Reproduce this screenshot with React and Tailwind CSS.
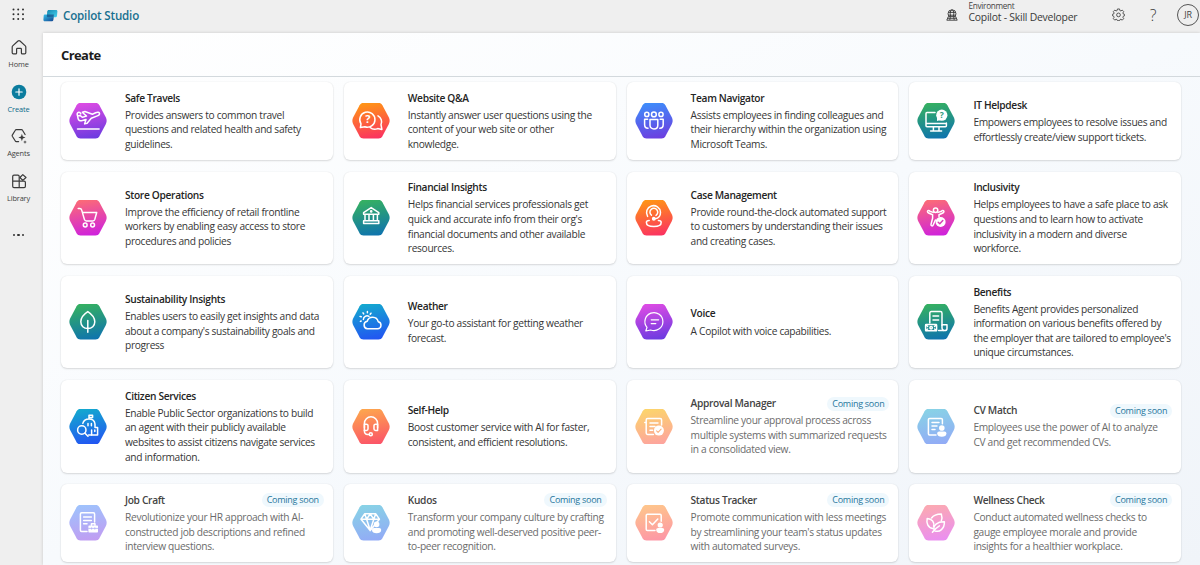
import { useId } from 'react';

const HEX_PATH =
  'M11.5 0h15c1.8 0 3 .6 3.9 2.2l6.5 12.3c1 2 1 4.4 0 6.4l-6.5 12.3c-.9 1.6-2.1 2.2-3.9 2.2h-15c-1.8 0-3-.6-3.9-2.2L1.1 20.9c-1-2-1-4.4 0-6.4L7.6 2.2C8.5.6 9.7 0 11.5 0z';

const gradients = {
  purple: ['#dc4be4', '#6d3be0'],
  orange: ['#ff9416', '#fb3360'],
  indigo: ['#3f8cfa', '#6c3fe0'],
  green: ['#35b062', '#0f74ad'],
  pink: ['#fb6a78', '#cf22dc'],
  blue: ['#14a8cf', '#2255f2'],
  coral: ['#fda54e', '#fb5468'],
  softYellow: ['#fcd46c', '#fda49e'],
  softBlue: ['#88d2e6', '#92abf6'],
  softIndigo: ['#9fc2fc', '#c09df2'],
  softCoral: ['#fec58c', '#fd97a6'],
  softPink: ['#fba9b2', '#ea8ff0'],
};

// White drawings that sit on top of the hexagons (38 x 35.4 space)
const glyphs = {
  plane: (
    <>
      <path d="M8.6 12.9l2.3-.5 2.6 1.9 4-1.2-4.2-3.9 2.7-.7 7.4 2.7 3.3-1.5c2-.8 3.6-.4 3.8.6.2 1-.7 2-2.2 2.6l-6 2.4-4.2 5-2.5.6 1.4-4.4-3.6 1c-2.4.6-4 0-4.300-1.800z" />
      <path d="M8.6 12.900c-.6-1.400-.4-3 .6-3.600 1-.5 2 .2 2.600 1.600M8.500 26h21.600" />
    </>
  ),
  qna: (
    <>
      <path d="M9 20.8a7.6 7.6 0 1 1 3.8 3l-4.4.8z" />
      <path d="M26 12.8a6.8 6.8 0 0 1 3 8.9l.9 4.8-4.2-.9c-2.7 1.2-5.8.5-7.6-1.1" />
      <text x="15.9" y="20.5" fontSize="11" fontWeight="700" textAnchor="middle" fill="white" stroke="none">?</text>
    </>
  ),
  team: (
    <>
      <circle cx="11.8" cy="11.4" r="2.1" />
      <circle cx="18.9" cy="11.4" r="2.4" />
      <circle cx="26" cy="11.4" r="2.1" />
      <path d="M15 16.4h7.8v5.8c0 5-7.8 5-7.8 0z" />
      <path d="M12.6 16.2h-3v5.2c0 2.6 1.2 3.8 3.4 3.8M25.2 16.2h3v5.2c0 2.6-1.2 3.8-3.4 3.8" />
    </>
  ),
  helpdesk: (
    <>
      <path d="M18 9.4H10c-.7 0-1 .4-1 1v12.4c0 .7.4 1 1 1h18.4c.7 0 1-.4 1-1V20M9 20.4h20.4M16.4 24v3.6M22 24v3.6M13.6 28h11" />
      <circle cx="24.8" cy="12.2" r="5.6" fill="white" stroke="none" />
      <path d="M20 14v4l3.4-1z" fill="white" stroke="none" />
      <text x="24.8" y="15.4" fontSize="8.5" fontWeight="700" textAnchor="middle" fill="#2a9a7c" stroke="none">?</text>
    </>
  ),
  cart: (
    <>
      <path d="M9.2 8.6h1.6c1 0 1.6.5 1.9 1.5l2.7 9.3c.3 1 .9 1.5 1.9 1.5h6.6c1 0 1.6-.5 1.9-1.5l1.9-6.9H13.4" />
      <circle cx="16.2" cy="25" r="1.9" />
      <circle cx="23.6" cy="25" r="1.9" />
    </>
  ),
  bank: (
    <>
      <path d="M11.6 14.2v-1.6L19.2 7.6l7.6 5v1.6zM13 14.2v6.6M17 14.2v6.6M21.4 14.2v6.6M25.4 14.2v6.6M11.6 23.4v-2.6h15.2v2.6z" />
      <circle cx="19.2" cy="11.4" r=".6" />
    </>
  ),
  caseCare: (
    <>
      <path d="M12.600 16.400a7 7 0 1 1 12.900-4.200c0 4-2 6.200-5.400 6.600" />
      <path d="M16.400 15.200a3.900 3.900 0 1 1 4.600.2" />
      <circle cx="18.800" cy="18.800" r="1.200" fill="white" />
      <path d="M14.200 20.600c-1.900 0-2.800.7-2.800 1.900 0 2.500 3.200 4 7.400 4s7.400-1.500 7.400-4c0-1.200-.9-1.900-2.800-1.900" />
    </>
  ),
  inclusivity: (
    <>
      <circle cx="18.6" cy="10.2" r="2.2" />
      <path d="M16.2 12.4l-3.400-1.200c-.6-1-1.800-1-2.200-.2-.4.9.2 1.700 1 2l4 1.800v3.400l-1.600 6.200c-.2 1.500 1.600 2.200 2.200.6l2.200-5M21 12.4l3.600-1.2c.6-1 1.800-1 2.200-.2.4.9-.2 1.700-1 2l-3.800 1.800v1.600" />
      <circle cx="23.600" cy="22" r="5" fill="white" stroke="none" />
      <path d="M21.200 22.200l1.600 1.600 3-3.200" stroke="#dc3fb6" />
    </>
  ),
  leaf: <path d="M18.800 7.600c-4 2.600-7 6-7 10.200 0 4 3 6.800 7 6.800s7-2.800 7-6.800c0-4.200-3-7.600-7-10.200zM18.800 16.400v11.800" />,
  weather: (
    <>
      <path d="M15.4 24.8h10.2a3.6 3.6 0 0 0 .6-7.1 5.7 5.7 0 0 0-11-.4 3.8 3.8 0 0 0 .2 7.5z" />
      <path d="M11.4 15.6a3.7 3.7 0 0 1 5.6-3.2M8.4 17.4l.8-.4M8 12.4l1.2.4M11 8.8l.7 1.1M15.4 7.6v1.2M19 9.2l-.8 1" />
    </>
  ),
  voice: (
    <>
      <path d="M12 23.4a9 9 0 1 1 3.6 2.6l-4.8 1z" strokeWidth="1.2" />
      <path d="M16.2 15.8h7.4M16.2 19.6h4.6" strokeWidth="1.2" />
    </>
  ),
  benefits: (
    <>
      <path d="M12.8 19V9.2c0-1 .6-1.6 1.6-1.6h9c1 0 1.6.6 1.6 1.6v12M16 12h5.6M16 16h5.6M25 20.8h5v3.6c0 1.4-.8 2.2-2.4 2.2h-6" />
      <path d="M25 21v3c0 1.2.6 2 1.6 2.4" />
      <rect x="8.6" y="20.6" width="11" height="6.2" rx=".6" />
      <circle cx="14.1" cy="23.7" r="1.2" />
      <path d="M9 21l1.600 1.400M19.200 21l-1.600 1.400M9 26.400l1.600-1.400M19.200 26.400L17.600 25" />
    </>
  ),
  citizen: (
    <>
      <path d="M13.8 14.4c.8-3 3.4-4.4 6.2-4.4s5.6 1.4 6 5v3.6h2.6V26h-9M20 10V6.2h3.6v2.4H20" />
      <path d="M19 14.6v2.2M22.4 14.6v2.2M22.6 26v-5M25.8 21v1.6" />
      <circle cx="12.8" cy="21" r="4.2" />
      <path d="M16 24.2l3 3" />
    </>
  ),
  headset: (
    <>
      <path d="M12.4 19v-4.6a6.6 6.6 0 0 1 13.2 0V19M12.4 21v1c0 2 1.2 3.4 3.2 3.4h1.6" />
      <path d="M12.4 15.2h2c1 0 1.6.5 1.6 1.4V20c0 .9-.6 1.4-1.6 1.4h-2zM25.6 15.2h-2c-1 0-1.6.5-1.6 1.4V20c0 .9.6 1.4 1.6 1.4h2z" />
      <circle cx="18.8" cy="25.2" r="1.5" />
    </>
  ),
  approval: (
    <>
      <path d="M18.4 25.4h-5.8c-1 0-1.4-.5-1.4-1.4V11c0-1 .5-1.4 1.4-1.4h12.6c1 0 1.4.5 1.4 1.4v5M15 14h8M15 17.6h5M15 21.2h2.6M9.8 13.4h1.4" />
      <circle cx="23.9" cy="21.6" r="5" fill="white" stroke="none" />
      <path d="M21.6 21.8l1.5 1.5 3-3.1" stroke="#fcb07e" strokeWidth="1.1" />
    </>
  ),
  cv: (
    <>
      <path d="M19 26H12.6c-.8 0-1.2-.4-1.2-1.2V10.6c0-.8.4-1.2 1.2-1.2h11.6c.8 0 1.2.4 1.2 1.2v4.2M15 13.4h7M15 17h5M15 20.6h3" />
      <circle cx="24.8" cy="19" r="2.8" fill="white" stroke="none" />
      <path d="M20.200 24.400c0-1.300.8-2 2-2h5.200c1.200 0 2 .7 2 2 0 2.200-1.900 3.300-4.600 3.300s-4.600-1.100-4.600-3.300z" fill="white" stroke="none" />
    </>
  ),
  job: (
    <>
      <path d="M18 26.4h-5.4c-.8 0-1.2-.4-1.2-1.2V9c0-.8.4-1.2 1.2-1.2h11.8c.8 0 1.2.4 1.2 1.2v8M14.600 12h7.800M14.600 15.400h7.800M14.600 18.800h3.400" />
      <path d="M20.400 20.400h7.600c.7 0 1 .3 1 1v5.200c0 .7-.3 1-1 1h-7.600c-.7 0-1-.3-1-1v-5.200c0-.7.3-1 1-1z" fill="white" stroke="none" />
      <path d="M22.400 20.200v-1.400h3.600v1.400" />
      <path d="M19.600 23.400h9.200M22.600 22.800v1.400M25.800 22.800v1.400" stroke="#b0aff7" strokeWidth=".8" />
    </>
  ),
  diamond: (
    <>
      <path d="M12.6 8.8h11.2l3.6 5.4-9.2 11.4L9 14.2zM9 14.2h18.4M14.6 14.2l3.600 11M21.800 14.200l-3.600 11M12.800 9l1.800 5.200 3.600-5.200 3.600 5.200 1.800-5.200" />
      <circle cx="24.6" cy="19.4" r="2.800" fill="white" stroke="none" />
      <path d="M20 25c0-1.300.8-2 2-2h5.200c1.200 0 2 .7 2 2 0 2.200-1.900 3.300-4.600 3.300S20 27.200 20 25z" fill="white" stroke="none" />
    </>
  ),
  status: (
    <>
      <path d="M20 25.4h-7.6c-.8 0-1.2-.4-1.2-1.2V10.4c0-.8.4-1.2 1.2-1.2H25c.8 0 1.2.4 1.2 1.2v5.8M14.4 16.8l3 3 5.4-5.8" />
      <circle cx="25.2" cy="20" r="2.6" fill="white" stroke="none" />
      <path d="M21.200 25c0-1.200.8-1.900 1.900-1.900h4.200c1.100 0 1.900.7 1.900 1.900 0 2.100-1.700 3.100-4 3.100s-4-1-4-3.100z" fill="white" stroke="none" />
    </>
  ),
  wellness: (
    <>
      <path d="M14.6 13c1.600-2.400 4.800-3.900 9.700-4 .8 2.400.8 5 0 7" />
      <path d="M16.600 21.200c1.200-4-1.600-7.400-6.400-7.800-1 4.600.600 9.400 5.600 10.200" />
      <path d="M17.200 25.600c-1.800-5.400 3.400-9 10.200-8.800.2 6.600-4.600 11.400-10.200 8.800zM15.400 27.200c2-2.800 4-4.600 7-6.400" />
    </>
  ),
};

const agents = [
  { title: 'Safe Travels', icon: 'plane', color: 'purple', lines: ['Provides answers to common travel', 'questions and related health and safety', 'guidelines.'] },
  { title: 'Website Q&A', icon: 'qna', color: 'orange', lines: ['Instantly answer user questions using the', 'content of your web site or other', 'knowledge.'] },
  { title: 'Team Navigator', icon: 'team', color: 'indigo', lines: ['Assists employees in finding colleagues and', 'their hierarchy within the organization using', 'Microsoft Teams.'] },
  { title: 'IT Helpdesk', icon: 'helpdesk', color: 'green', lines: ['Empowers employees to resolve issues and', 'effortlessly create/view support tickets.'] },
  { title: 'Store Operations', icon: 'cart', color: 'pink', lines: ['Improve the efficiency of retail frontline', 'workers by enabling easy access to store', 'procedures and policies'] },
  { title: 'Financial Insights', icon: 'bank', color: 'green', lines: ['Helps financial services professionals get', "quick and accurate info from their org's", 'financial documents and other available', 'resources.'] },
  { title: 'Case Management', icon: 'caseCare', color: 'orange', lines: ['Provide round-the-clock automated support', 'to customers by understanding their issues', 'and creating cases.'] },
  { title: 'Inclusivity', icon: 'inclusivity', color: 'pink', lines: ['Helps employees to have a safe place to ask', 'questions and to learn how to activate', 'inclusivity in a modern and diverse', 'workforce.'] },
  { title: 'Sustainability Insights', icon: 'leaf', color: 'green', lines: ['Enables users to easily get insights and data', "about a company's sustainability goals and", 'progress'] },
  { title: 'Weather', icon: 'weather', color: 'blue', lines: ['Your go-to assistant for getting weather', 'forecast.'] },
  { title: 'Voice', icon: 'voice', color: 'purple', lines: ['A Copilot with voice capabilities.'] },
  { title: 'Benefits', icon: 'benefits', color: 'green', lines: ['Benefits Agent provides personalized', 'information on various benefits offered by', "the employer that are tailored to employee's", 'unique circumstances.'] },
  { title: 'Citizen Services', icon: 'citizen', color: 'blue', lines: ['Enable Public Sector organizations to build', 'an agent with their publicly available', 'websites to assist citizens navigate services', 'and information.'] },
  { title: 'Self-Help', icon: 'headset', color: 'coral', lines: ['Boost customer service with AI for faster,', 'consistent, and efficient resolutions.'] },
  { title: 'Approval Manager', icon: 'approval', color: 'softYellow', soon: true, lines: ['Streamline your approval process across', 'multiple systems with summarized requests', 'in a consolidated view.'] },
  { title: 'CV Match', icon: 'cv', color: 'softBlue', soon: true, lines: ['Employees use the power of AI to analyze', 'CV and get recommended CVs.'] },
  { title: 'Job Craft', icon: 'job', color: 'softIndigo', soon: true, lines: ['Revolutionize your HR approach with AI-', 'constructed job descriptions and refined', 'interview questions.'] },
  { title: 'Kudos', icon: 'diamond', color: 'softBlue', soon: true, lines: ['Transform your company culture by crafting', 'and promoting well-deserved positive peer-', 'to-peer recognition.'] },
  { title: 'Status Tracker', icon: 'status', color: 'softCoral', soon: true, lines: ['Promote communication with less meetings', "by streamlining your team's status updates", 'with automated surveys.'] },
  { title: 'Wellness Check', icon: 'wellness', color: 'softPink', soon: true, lines: ['Conduct automated wellness checks to', 'gauge employee morale and provide', 'insights for a healthier workplace.'] },
];

function HexIcon({ icon, color }) {
  const id = useId();
  const [from, to] = gradients[color];
  return (
    <svg viewBox="0 0 38 35.4" className="h-[35.4px] w-[38px] shrink-0">
      <defs>
        <linearGradient id={id} x1="0.4" y1="0" x2="0.6" y2="1">
          <stop offset="0" stopColor={from} />
          <stop offset="1" stopColor={to} />
        </linearGradient>
      </defs>
      <path d={HEX_PATH} fill={`url(#${id})`} />
      <g fill="none" stroke="white" strokeWidth="1.5" strokeLinecap="round" strokeLinejoin="round">
        {glyphs[icon]}
      </g>
    </svg>
  );
}

function AgentCard({ agent }) {
  return (
    <div className="flex items-center rounded-[6px] bg-white pl-2 shadow-[0_1px_2px_rgba(0,0,0,0.13),0_0_1.5px_rgba(0,0,0,0.09)]">
      <HexIcon icon={agent.icon} color={agent.color} />
      <div className="ml-[18px] flex-1 whitespace-nowrap">
        <div className="mb-[2.4px] flex h-[15.2px] items-center justify-between pr-[9px] pt-px">
          <h3 className={agent.soon ? 'text-[10.2px] font-semibold tracking-[-0.032em] text-[#444444]' : 'text-[10.2px] font-semibold tracking-[-0.032em] text-[#242424]'}>
            {agent.title}
          </h3>
          {agent.soon && (
            <span className="rounded-full bg-[#eff8fd] px-[5px] text-[9px] leading-[14px] tracking-[-0.03em] text-[#1f769c]">
              Coming soon
            </span>
          )}
        </div>
        <p className={agent.soon ? 'text-[10.2px] leading-[14.6px] tracking-[-0.031em] text-[#6b6b6b]' : 'text-[10.2px] leading-[14.6px] tracking-[-0.031em] text-[#363636]'}>
          {agent.lines.map((line) => (
            <span key={line} className="block">{line}</span>
          ))}
        </p>
      </div>
    </div>
  );
}

function CopilotLogo() {
  return (
    <svg viewBox="0 0 15 14" className="h-[14px] w-[15px]">
      <defs>
        <linearGradient id="logo-top" x1="0" y1="0" x2="1" y2="1">
          <stop offset="0" stopColor="#1587b0" />
          <stop offset="1" stopColor="#45d3f0" />
        </linearGradient>
        <linearGradient id="logo-bottom" x1="0" y1="0" x2="1" y2="1">
          <stop offset="0" stopColor="#37c3ec" />
          <stop offset="1" stopColor="#10418f" />
        </linearGradient>
      </defs>
      <path d="M1.7 5.4h7.9c1 0 1.4.6 1.3 1.5l-.5 3.8c-.2 1-.9 1.6-2 1.6H1.8c-1 0-1.5-.6-1.4-1.5l.3-4.2c.1-.8.4-1.200 1-1.200z" fill="url(#logo-bottom)" />
      <path d="M5.9 1h7.100c1 0 1.500.6 1.400 1.500l-.4 4.200c-.1 1-.8 1.600-1.900 1.600H5.200c-1 0-1.500-.6-1.300-1.500l.3-4.200C4.400 1.600 4.900 1 5.900 1z" fill="url(#logo-top)" />
      <path d="M4 5.400h6.900l-.3 2.900H5.200c-1 0-1.500-.6-1.300-1.500z" fill="#123f7c" opacity=".65" />
    </svg>
  );
}

const navIcons = {
  Home: <path d="M1.7 6.9L7 2c.6-.5 1.4-.5 2 0l5.3 4.9c.3.3.5.7.5 1.2v5.600c0 .7-.5 1.200-1.200 1.200h-2.200c-.6 0-1-.4-1-1v-3.700c0-.5-.3-.8-.8-.8H6.400c-.5 0-.8.3-.8.800v3.700c0 .6-.4 1-1 1H2.400c-.7 0-1.200-.5-1.200-1.200V8.100c0-.5.2-.9.5-1.200z" />,
  Agents: (
    <>
      <path d="M7.600 13.600H5.400c-.5 0-.9-.2-1.100-.6L1.300 8.300c-.2-.4-.2-.8 0-1.200l3-4.900c.2-.4.600-.6 1.100-.6h5c.5 0 .9.2 1.100.6l2.600 4.300" />
      <path d="M10.900 5.800l.9 2.800 2.700.9-2.700.9-.9 2.800-.9-2.800-2.700-.9 2.700-.9z" fill="#3a3a3a" stroke="none" />
      <path d="M14 12.200l.5 1.400 1.400.5-1.400.5-.5 1.400-.5-1.400-1.400-.5 1.400-.5z" fill="#3a3a3a" stroke="none" />
    </>
  ),
  Library: (
    <>
      <path d="M8.200 8.200H1.700M7.600 14.600H3c-.8 0-1.300-.5-1.300-1.300V3.500c0-.8.5-1.300 1.300-1.300h3.900c.8 0 1.300.5 1.300 1.300v11.100M8.200 8.200h4.900c.8 0 1.300.5 1.300 1.300v3.800c0 .8-.5 1.300-1.300 1.300H7.600" />
      <path d="M11.800 1.600l3.200 2.900-3.200 2.900-2.900-2.900z" fill="#efefef" />
    </>
  ),
};

function NavItem({ label }) {
  const active = label === 'Create';
  return (
    <div className="flex h-[44.7px] flex-col items-center">
      {active ? (
        <svg viewBox="0 0 16 16" className="size-4">
          <circle cx="8" cy="8" r="7.3" fill="#0b7c9e" />
          <path d="M8 4.8v6.4M4.8 8h6.4" stroke="white" strokeWidth="1.200" strokeLinecap="round" />
        </svg>
      ) : (
        <svg viewBox="0 0 16 16" className="size-4" fill="none" stroke="#3a3a3a" strokeWidth="1.2" strokeLinejoin="round" strokeLinecap="round">
          {navIcons[label]}
        </svg>
      )}
      <span className={active ? 'mt-1 text-[7.4px] leading-[10px] tracking-[-0.02em] text-[#0b6a8a]' : 'mt-1 text-[7.4px] leading-[10px] tracking-[-0.02em] text-[#424242]'}>
        {label}
      </span>
    </div>
  );
}

export default function App() {
  return (
    <div className="flex h-[565px] w-[1200px] flex-col overflow-hidden bg-[#efefef] font-['Open_Sans','Noto_Sans',sans-serif]">
      <header className="flex h-[32.5px] shrink-0 items-center pl-3">
        <svg viewBox="0 0 12 12" className="mb-1 size-3" fill="#2f2f2f">
          {[1.5, 6.2, 11].map((y) =>
            [1.5, 6.2, 11].map((x) => <circle key={`${x}-${y}`} cx={x} cy={y} r="1" />)
          )}
        </svg>
        <div className="mb-px ml-[19px] flex items-center gap-[5px]">
          <CopilotLogo />
          <span className="text-[11.6px] font-semibold leading-4 tracking-[-0.016em] text-[#19708f]">Copilot Studio</span>
        </div>

        <div className="mb-[3px] ml-auto flex items-center">
          <svg viewBox="0 0 12 12" className="h-3 w-3" fill="none" stroke="#383838" strokeWidth=".9" strokeLinejoin="round">
            <circle cx="6" cy="4.8" r="4" />
            <ellipse cx="6" cy="4.8" rx="1.8" ry="4" />
            <path d="M2.3 3.4h7.4M2.2 6.2h7.6" />
            <path d="M2.3 7.600h7.400l1.500 3.600H.8z" fill="#efefef" />
            <path d="M1.800 9.300h8.400M4.300 7.800l-.5 3.200M7.700 7.800l.5 3.200" />
          </svg>
          <div className="ml-[11px] flex w-[110px] flex-col whitespace-nowrap pb-[5px]">
            <span className="text-[8.2px] leading-[11px] tracking-[-0.035em] text-[#444444]">Environment</span>
            <span className="text-[10.4px] leading-[13px] tracking-[-0.022em] text-[#3a3a3a]">Copilot - Skill Developer</span>
          </div>
          <svg viewBox="0 0 16 16" className="ml-[33.5px] size-[13px]" fill="none" stroke="#444444" strokeWidth="1.1" strokeLinejoin="round">
            <path d="M6.7 1.2h2.6l.4 1.9 1.2.5 1.7-1 1.8 1.8-1 1.7.5 1.2 1.3.3v2.2l-1.3.4-.5 1.2 1 1.7-1.8 1.800-1.700-1-1.200.5-.4 1.200H6.700l-.4-1.200-1.200-.5-1.700 1-1.800-1.800 1-1.700-.5-1.200-1.300-.4V7.600l1.300-.3.5-1.200-1-1.700 1.800-1.800 1.700 1 1.200-.5z" />
            <circle cx="8" cy="8.5" r="2.3" />
          </svg>
          <span className="ml-[22px] w-3 text-center text-[16px] font-light leading-4 text-[#3a3a3a]">?</span>
          <span className="ml-[18px] mr-px flex size-[22px] items-center justify-center rounded-full border border-[#555555] text-[9px] tracking-[-0.03em] text-[#444444]">
            JR
          </span>
        </div>
      </header>

      <div className="flex min-h-0 flex-1">
        <nav className="flex w-[43px] shrink-0 flex-col pr-[6px] pt-[6.500px]">
          {['Home', 'Create', 'Agents', 'Library'].map((label) => (
            <NavItem key={label} label={label} />
          ))}
          <div className="mt-4 flex justify-center gap-[2px]">
            <span className="size-[2.5px] rounded-full bg-[#333333]" />
            <span className="size-[2.5px] rounded-full bg-[#333333]" />
            <span className="size-[2.5px] rounded-full bg-[#333333]" />
          </div>
        </nav>

        <main className="flex min-w-0 flex-1 flex-col bg-linear-to-br from-white via-[#f7fafd] to-[#f0f4f9] shadow-[0_0_3px_rgba(0,0,0,0.16)]">
          <div className="flex h-[44px] shrink-0 items-center border-b border-[#d3d9dd] pl-[18px] pt-[3px]">
            <h1 className="text-[13px] font-bold tracking-[-0.045em] text-[#1c1c1c]">Create</h1>
          </div>
          <div className="grid grid-cols-[repeat(4,271.8px)] grid-rows-[78px_92.7px_92.7px_92.7px_78px] gap-x-[11px] gap-y-[11.5px] pl-[18px] pt-[5.5px]">
            {agents.map((agent) => (
              <AgentCard key={agent.title} agent={agent} />
            ))}
          </div>
        </main>
      </div>
    </div>
  );
}
